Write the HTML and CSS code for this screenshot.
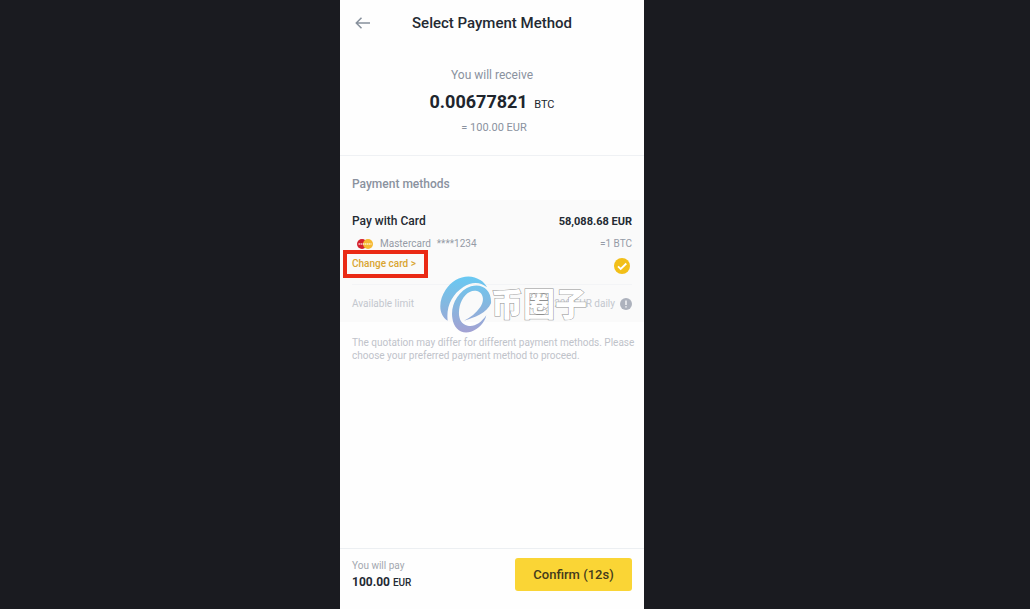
FILE: index.html
```html
<!DOCTYPE html>
<html lang="en">
<head>
<meta charset="utf-8">
<meta name="viewport" content="width=device-width, initial-scale=1">
<title>Select Payment Method</title>
<link rel="stylesheet" href="styles.css">
</head>
<body>
<main class="screen">
  <header class="topbar">
    <button class="back" type="button" aria-label="Back">
      <svg width="16" height="14" viewBox="0 0 16 14"><path d="M15 7H1.5M6.500 1.800 1.300 7 6.500 12.200" fill="none" stroke="#87909c" stroke-width="1.500"/></svg>
    </button>
    <h1 class="title">Select Payment Method</h1>
  </header>
  <section class="receive">
    <p class="receive-label">You will receive</p>
    <p class="receive-amount">0.00677821 <span class="unit">BTC</span></p>
    <p class="receive-fiat">= 100.00 EUR</p>
  </section>
  <h2 class="section-title">Payment methods</h2>
  <section class="card">
    <div class="row pay-row"><span>Pay with Card</span><span class="price">58,088.68 EUR</span></div>
    <div class="row brand-row">
      <span class="brand">
        <svg width="18" height="12" viewBox="0 0 18 12"><circle cx="6" cy="6" r="5" fill="#d5202d"/><circle cx="12" cy="6" r="5" fill="#f5b932"/><path d="M2.500 6h13" stroke="#fff" stroke-opacity=".75" stroke-width="1.500" stroke-dasharray="1.500 .5" fill="none"/></svg>
        <span>Mastercard</span><span>****1234</span>
      </span>
      <span>=1 BTC</span>
    </div>
    <div class="row change-row">
      <a class="change" href="#cards">Change card &gt;</a>
      <svg class="check" width="16" height="16" viewBox="0 0 16 16"><circle cx="8" cy="8" r="8" fill="#f2bf18"/><path d="m4 8.300 2.700 2.600L12.300 5.500" fill="none" stroke="#fff" stroke-width="1.800"/></svg>
    </div>
    <div class="row limit-row">
      <span>Available limit</span>
      <span class="limit"><span>200 EUR daily</span>
        <svg width="12" height="12" viewBox="0 0 12 12"><circle cx="6" cy="6" r="6" fill="#adb2bd"/><path d="M6 2.500v4.500M6 8.200v1.300" stroke="#fff" stroke-width="1.300"/></svg>
      </span>
    </div>
    <div class="watermark">
      <svg width="52" height="58" viewBox="0 0 156 174">
        <defs><linearGradient id="wave" x1="0" y1="0" x2="0" y2="174" gradientUnits="userSpaceOnUse"><stop offset="0" stop-color="#68c9f3"/><stop offset=".45" stop-color="#82b9e1"/><stop offset="1" stop-color="#a5a0d2"/></linearGradient></defs>
        <path fill="url(#wave)" d="M23 134C-7 115-4 72 17 41C40 5 87-12 122 13C131 19 138 27 141 34C120 16 94 17 70 33C36 55 18 92 23 134Z"/>
        <path fill="url(#wave)" d="M153 82C156 45 128 20 93 31C54 44 31 88 37 126C41 158 64 176 93 167C116 160 134 140 139 118C122 142 103 153 83 149C59 144 53 119 59 91C66 61 89 39 111 45C131 51 134 73 121 93C108 112 92 124 72 134C102 126 142 110 153 82Z"/>
      </svg>
      <svg class="mark" width="100" height="38" viewBox="0 0 100 38"><text x="1" y="30">币圈子</text></svg>
    </div>
  </section>
  <p class="note">The quotation may differ for different payment methods. Please choose your preferred payment method to proceed.</p>
  <footer class="footer">
    <div>
      <p class="pay-label">You will pay</p>
      <p class="pay-amount">100.00 <span class="pay-unit">EUR</span></p>
    </div>
    <button class="confirm" type="button">Confirm (12s)</button>
  </footer>
</main>
</body>
</html>
```
FILE: styles.css
```css
* { box-sizing: border-box; }
body {
  display: grid;
  grid-template-columns: 340fr minmax(auto, 304px) 386fr;
  margin: 0;
  background: #1a1b20;
  color: #242a33;
  font-family: Roboto, "Noto Sans CJK SC", sans-serif;
}
h1, h2, p { margin: 0; }
button { border: 0; padding: 0; font: inherit; color: inherit; cursor: pointer; }
svg { display: block; }
.screen {
  display: flex;
  flex-direction: column;
  grid-column: 2;
  min-height: 100vh;
  background: #fefefe;
}
.topbar {
  display: grid;
  grid-template-columns: 16px 1fr 16px;
  align-items: center;
  height: 46px;
  padding: 0 15px;
}
.back { background: none; }
.title { font-size: 15px; font-weight: 500; text-align: center; }
.receive {
  padding: 20px 12px 19px;
  border-bottom: 1px solid #eff1f4;
  text-align: center;
  color: #8a929f;
}
.receive-label { font-size: 12px; line-height: 18px; }
.receive-amount {
  color: #20252d;
  font-size: 18px;
  font-weight: 700;
  line-height: 35px;
}
.unit { margin-left: 2px; font-size: 11px; font-weight: 400; line-height: 1; }
.receive-fiat { padding-left: 4px; font-size: 11px; line-height: 17px; }
.section-title {
  padding: 20px 12px 8px;
  color: #8a929f;
  font-size: 12px;
  font-weight: 500;
  line-height: 16px;
}
.card {
  position: relative;
  padding: 11px 12px 0;
  background: #fafafa;
}
.row { display: flex; justify-content: space-between; align-items: center; }
.pay-row { height: 20px; font-size: 12px; font-weight: 500; }
.price { font-size: 11px; font-weight: 700; }
.brand-row { height: 25px; color: #959ba6; font-size: 10px; }
.brand { display: flex; align-items: center; gap: 6px; padding-left: 4px; }
.change-row { height: 29px; align-items: flex-start; border-bottom: 1px solid #f3f4f6; }
.change {
  margin: -6px 0 0 -9px;
  padding: 4px 8px 5px 5px;
  border: 4px solid #ea2a15;
  color: #d9a531;
  font-size: 10px;
  font-weight: 500;
  line-height: 11px;
  text-decoration: none;
}
.check { margin: 2px 2px 0 0; }
.limit-row { height: 37px; color: #c3c7ce; font-size: 10px; }
.limit { display: flex; align-items: center; gap: 5px; }
.watermark {
  position: absolute;
  top: 76px;
  left: 100px;
  display: flex;
  align-items: center;
  pointer-events: none;
}
.mark {
  margin-left: -2px;
  fill: #fff;
  stroke: #8f8f8f;
  stroke-width: 1px;
  paint-order: stroke;
  font-family: "Noto Sans CJK SC", sans-serif;
  font-size: 32px;
  font-weight: 900;
}
.note {
  padding: 14px 8px 14px 12px;
  color: #c0c3ca;
  font-size: 10px;
  line-height: 13px;
}
.footer {
  display: flex;
  justify-content: space-between;
  align-items: flex-start;
  margin-top: auto;
  padding: 9px 12px 18px;
  border-top: 1px solid #eceff2;
}
.pay-label { color: #a3a7af; font-size: 10px; line-height: 16px; }
.pay-amount { font-size: 12px; font-weight: 700; line-height: 16px; }
.pay-unit { font-size: 10px; font-weight: 500; }
.confirm {
  width: 117px;
  height: 33px;
  border-radius: 3px;
  background: #fad535;
  color: #443b1c;
  font-size: 13px;
  font-weight: 500;
}
```
